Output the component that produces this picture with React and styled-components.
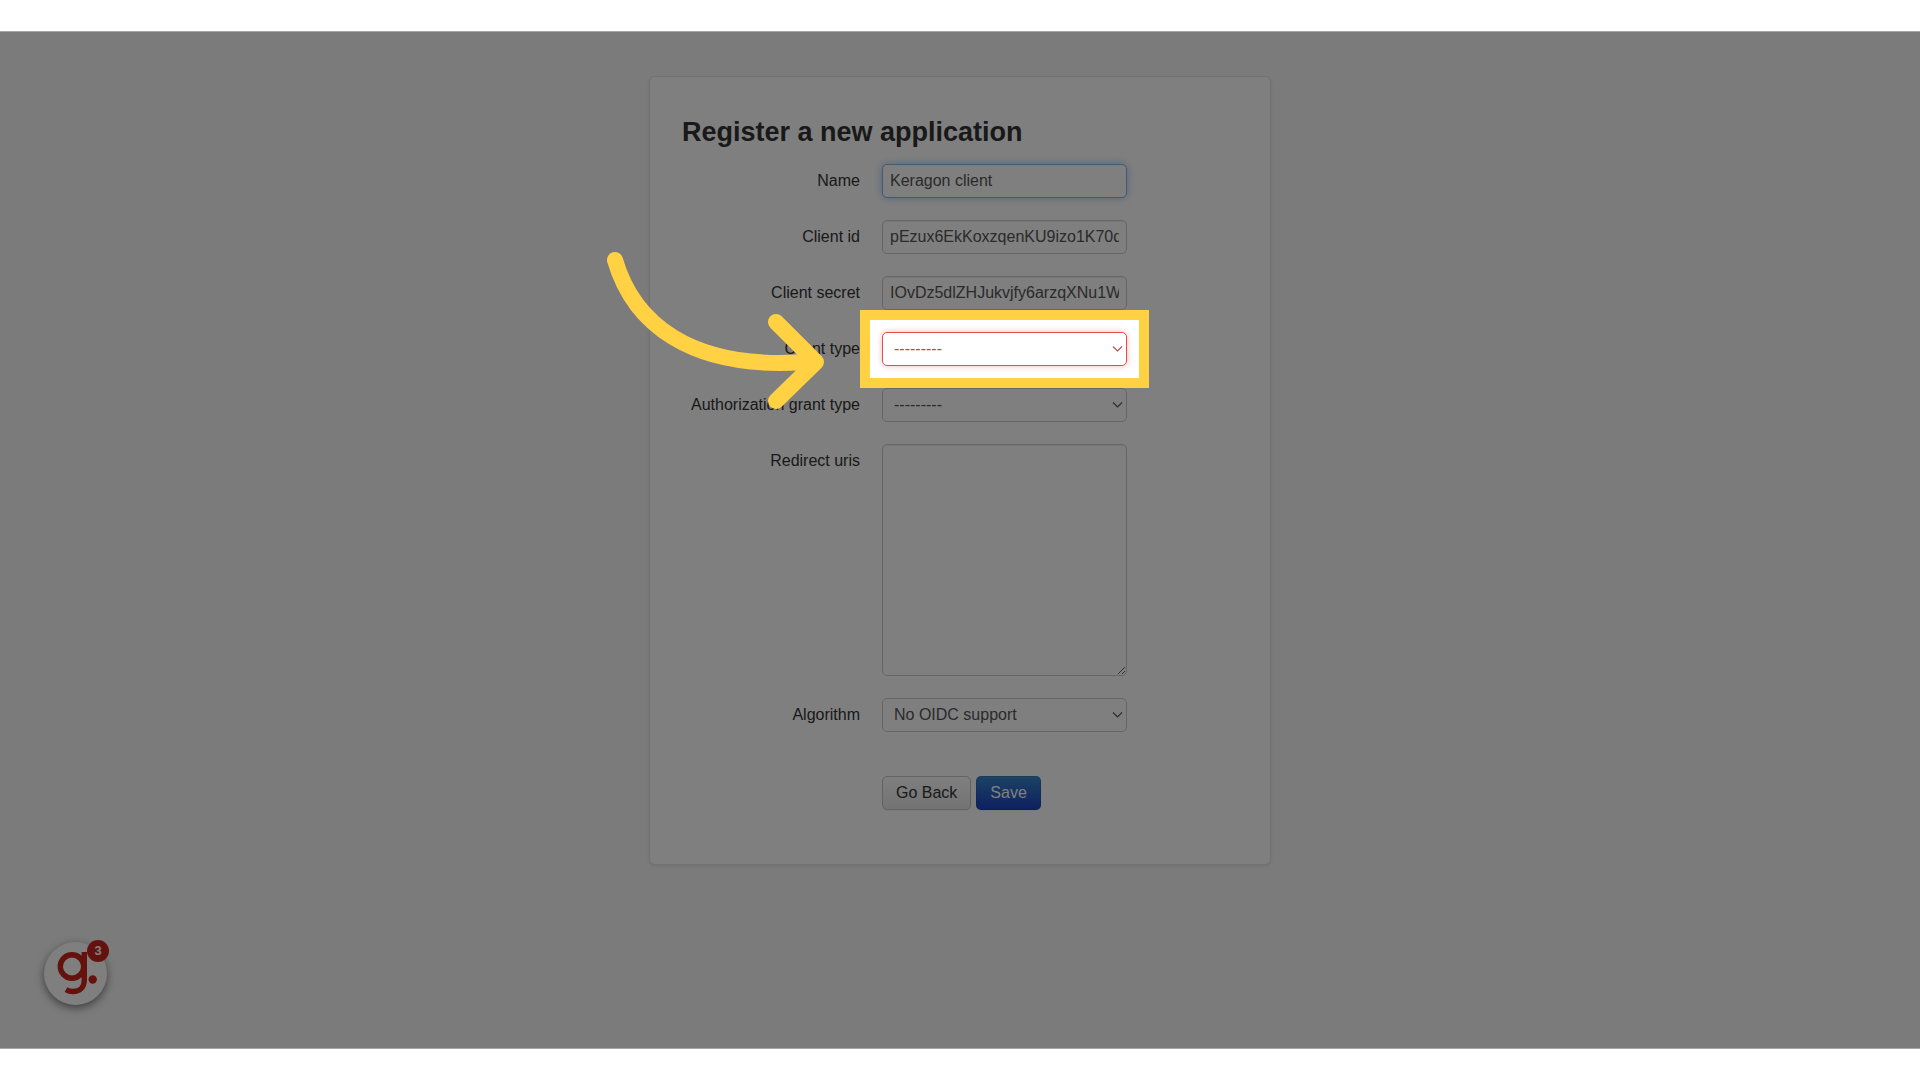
import React, { useState } from 'react'
import styled, { createGlobalStyle, css } from 'styled-components'

const GlobalStyle = createGlobalStyle`
  *, *::before, *::after {
    box-sizing: border-box;
  }
  body {
    margin: 0;
    background: #fff;
    color: #333;
    font-family: 'Liberation Sans', Arial, sans-serif;
    font-size: 16px;
    line-height: 22px;
  }
`

const Page = styled.div`
  min-height: 100vh;
  padding: 31px 0;
  display: flex;
  flex-direction: column;
`

// overflow is hidden so that the spotlight shade stays inside the stage
const Stage = styled.main`
  position: relative;
  flex: 1;
  padding: 44px 16px 48px;
  overflow: hidden;
  background: #f6f6f6;
  border: solid #a6a6a6;
  border-width: 1px 0;
`

const Card = styled.section`
  width: 100%;
  max-width: 622px;
  margin: 0 auto;
  padding: 36px 32px 54px;
  background: #fff;
  border: 1px solid #e5e5e5;
  border-radius: 6px;
  box-shadow: 0 1px 3px rgba(0, 0, 0, 0.1);
`

const Title = styled.h1`
  margin: 0 0 12px;
  font-size: 27px;
  line-height: 39px;
  font-weight: 700;
`

const Form = styled.form`
  display: flex;
  flex-direction: column;
  gap: 22px;
`

const Row = styled.div`
  display: grid;
  grid-template-columns: 178px 245px;
  column-gap: 22px;
  align-items: start;
`

const Label = styled.label`
  padding-top: 6px;
  text-align: right;
  white-space: nowrap;
`

const Field = styled.div`
  position: relative;
  display: flex;
`

const control = css`
  width: 100%;
  color: #555;
  font: inherit;
  background: #fff;
  border: 1px solid #ccc;
  border-radius: 5px;
  box-shadow: inset 0 1px 1px rgba(0, 0, 0, 0.075);
  outline: none;
`

const Input = styled.input`
  ${control}
  height: 34px;
  padding: 5px 7px;
  ${({ $active }) =>
    $active &&
    css`
      border-color: #80b4e2;
      box-shadow: 0 0 8px rgba(82, 150, 220, 0.5);
    `}
`

const Select = styled.select`
  ${control}
  height: 34px;
  padding: 5px 28px 5px 11px;
  appearance: none;
  box-shadow: none;
  ${({ $invalid }) =>
    $invalid &&
    css`
      color: #b94a48;
      border-color: #e0504b;
      box-shadow: 0 0 6px #f8b9b7;
    `}
`

const Textarea = styled.textarea`
  ${control}
  height: 232px;
  padding: 5px 7px;
  resize: both;
`

const Chevron = styled.svg`
  position: absolute;
  top: 13px;
  right: 4px;
  width: 11px;
  height: 8px;
  fill: none;
  stroke: ${({ $invalid }) => ($invalid ? '#b94a48' : '#555')};
  stroke-width: 1.1;
  pointer-events: none;
`

const Actions = styled.div`
  display: flex;
  gap: 5px;
  padding: 22px 0 0 200px;
`

const Button = styled.button`
  height: 34px;
  padding: 0 13px;
  font: inherit;
  border-radius: 5px;
  color: ${({ $primary }) => ($primary ? '#fff' : '#333')};
  background: ${({ $primary }) =>
    $primary ? 'linear-gradient(#3a87c8, #1a3fc4)' : 'linear-gradient(#fff, #e6e6e6)'};
  background-origin: border-box;
  border: 1px solid ${({ $primary }) => ($primary ? 'rgba(0, 0, 0, 0.1)' : '#c5c5c5')};
  box-shadow: 0 1px 2px rgba(0, 0, 0, 0.05);
`

const Spotlight = styled.div`
  position: absolute;
  z-index: 2;
  inset: -22px;
  border: 10px solid #ffd143;
  box-shadow: 0 0 0 200vmax rgba(0, 0, 0, 0.5);
  pointer-events: none;
`

const Arrow = styled.svg`
  position: absolute;
  z-index: 3;
  right: 301px;
  top: -83px;
  width: 224px;
  height: 164px;
  fill: none;
  stroke: #ffd143;
  stroke-width: 16;
  stroke-linecap: round;
  stroke-linejoin: round;
  pointer-events: none;
`

const Launcher = styled.button`
  position: absolute;
  left: 44px;
  bottom: 43px;
  width: 63px;
  height: 63px;
  padding: 0;
  border: 0;
  border-radius: 50%;
  background: #fff;
  box-shadow: 0 3px 8px rgba(0, 0, 0, 0.5);

  svg {
    display: block;
  }
`

const Badge = styled.span`
  position: absolute;
  top: -2px;
  right: -2px;
  width: 22px;
  height: 22px;
  border-radius: 50%;
  background: #c9241a;
  color: #fff;
  font-size: 13px;
  font-weight: 700;
  line-height: 22px;
`

function SelectField({ id, label, options, invalid, children }) {
  return (
    <Row>
      <Label htmlFor={id}>{label}</Label>
      <Field>
        <Select id={id} $invalid={invalid}>
          {options.map((option) => (
            <option key={option}>{option}</option>
          ))}
        </Select>
        <Chevron viewBox="0 0 11 8" $invalid={invalid} aria-hidden="true">
          <path d="M1 1.5 5.5 6 10 1.5" />
        </Chevron>
        {children}
      </Field>
    </Row>
  )
}

function TextField({ id, label, value, active }) {
  const [text, setText] = useState(value)
  return (
    <Row>
      <Label htmlFor={id}>{label}</Label>
      <Input id={id} value={text} $active={active} onChange={(e) => setText(e.target.value)} />
    </Row>
  )
}

function App() {
  return (
    <Page>
      <GlobalStyle />
      <Stage>
        <Card>
          <Title>Register a new application</Title>
          <Form onSubmit={(e) => e.preventDefault()}>
            <TextField id="name" label="Name" value="Keragon client" active />
            <TextField id="client-id" label="Client id" value="pEzux6EkKoxzqenKU9izo1K70df" />
            <TextField id="client-secret" label="Client secret" value="IOvDz5dlZHJukvjfy6arzqXNu1W8" />
            <SelectField id="client-type" label="Client type" options={['---------']} invalid>
              <Spotlight />
              <Arrow viewBox="0 0 224 164" aria-hidden="true">
                <path d="M13 11C31 73 87 121 202 113" />
                <path d="M174 73 214 113 174 152" />
              </Arrow>
            </SelectField>
            <SelectField id="grant-type" label="Authorization grant type" options={['---------']} />
            <Row>
              <Label htmlFor="redirect-uris">Redirect uris</Label>
              <Textarea id="redirect-uris" />
            </Row>
            <SelectField id="algorithm" label="Algorithm" options={['No OIDC support']} />
            <Actions>
              <Button type="button">Go Back</Button>
              <Button type="submit" $primary>Save</Button>
            </Actions>
          </Form>
        </Card>
        <Launcher type="button" aria-label="Open guide">
          <svg width="63" height="63" viewBox="0 0 63 63" fill="none" stroke="#c9241a" strokeWidth="5.4">
            <circle cx="28" cy="24.5" r="11.7" />
            <path d="M40.3 10V38C40.3 46 35 49.5 29 49.5 26 49.5 24 48.8 22 47.6" />
            <circle cx="48.7" cy="37.5" r="4.2" fill="#c9241a" stroke="none" />
          </svg>
          <Badge>3</Badge>
        </Launcher>
      </Stage>
    </Page>
  )
}

export default App
